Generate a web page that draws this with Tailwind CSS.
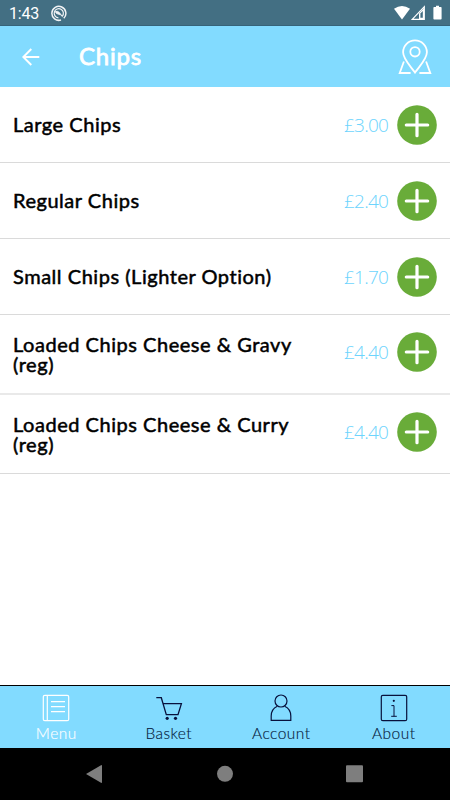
<!DOCTYPE html>
<html lang="en">
<head>
<meta charset="utf-8">
<title>Chips</title>
<script src="https://cdn.jsdelivr.net/npm/@tailwindcss/browser@4"></script>
</head>
<body class="w-[450px] h-[800px] overflow-hidden bg-white font-['Lato',sans-serif] flex flex-col text-black">
<svg class="hidden">
  <symbol id="add" viewBox="0 0 40 40"><circle cx="20" cy="20" r="19.8" fill="#69ac39"/><path d="M20 9.3V30.7M9.3 20H30.7" stroke="#fff" stroke-width="3.2" stroke-linecap="round"/></symbol>
</svg>
<div class="h-[26px] shrink-0 bg-[#436f83] border-b border-[#366379] flex items-center pl-[9px] pr-[8px] text-white">
  <span class="font-['Roboto',sans-serif] text-[16px] leading-[26px] w-[30px] pt-[2px] tracking-[-0.2px] whitespace-nowrap">1:43</span>
  <svg class="ml-[11px] w-[17px] h-[17px] mt-[1px]" viewBox="0 0 17 17" fill="none" stroke="#f1f3f5"><path d="M13.8 13.3A7 7 0 1 0 11 15" stroke-width="1.5"/><path d="M12.3 11.2A4.6 4.6 0 1 0 8.4 12.8" stroke-width="1.2"/><path d="M5.2 6.6Q8 5.4 10 8.2L12.4 11.6Q10.5 9.2 8.6 9.3Q6 9 5.2 6.6Z" fill="#f1f3f5" stroke-width="0.8"/></svg>
  <span class="grow"></span>
  <svg class="w-[48px] h-[16px]" viewBox="0 0 48 16"><path d="M0 3.8Q8 -1.8 16 3.8L8 14.4Z" fill="#fff"/><path d="M30.3 1.7V14.3H18.2Z" fill="none" stroke="#fff" stroke-width="1.2"/><path d="M25 8.2L30 3V14H25Z" fill="#fff"/><path d="M26.4 8.6L28.8 6V12.8H26.4Z" fill="#436f83"/><path d="M40.2 2H42V.7H45V2H46.8Q47.6 2 47.6 2.8V13.8Q47.6 14.6 46.8 14.6H40.2Q39.4 14.6 39.4 13.8V2.8Q39.4 2 40.2 2Z" fill="#fff"/></svg>
</div>
<header class="h-[61px] shrink-0 bg-[#82dbff] flex items-center pl-[22px] pr-[17px] text-white">
  <svg class="w-[18px] h-[18px]" viewBox="0 0 18 18" fill="none" stroke="#fff" stroke-width="1.9"><path d="M17.3 9H1.5M9.3 1L1.3 9L9.3 17"/></svg>
  <h1 class="ml-[39px] pb-[2px] text-[24px] leading-[30px] font-normal [-webkit-text-stroke:0.8px] tracking-[0.8px] grow">Chips</h1>
  <svg class="w-[36px] h-[36px]" viewBox="0 0 36 36" fill="none" stroke="#fff" stroke-width="1.8"><path d="M18 33.6C13 26.5 6.1 20 6.1 13.3A11.9 11.9 0 0 1 29.9 13.3C29.9 20 23 26.5 18 33.6Z"/><circle cx="18" cy="12.8" r="4.7"/><path d="M6.9 22.5L2.7 34H13.6M29.1 22.5L33.3 34H22.4"/></svg>
</header>
<main class="grow text-[20px] leading-[20px] [&_b]:font-normal [&_b]:grow [&_b]:tracking-[0.53px] [&_b]:[-webkit-text-stroke:0.5px] [&_i]:not-italic [&_i]:font-['Open_Sans',sans-serif] [&_i]:font-light [&_i]:text-[19px] [&_i]:tracking-[-0.75px] [&_i]:text-[#6dd4fd] [&_i]:w-[45px] [&_i]:mr-[8px] [&_i]:whitespace-nowrap">
  <div class="h-[76px] border-b border-[#dadada] flex items-center px-[13px]"><b class="pb-[2px]">Large Chips</b><i>£3.00</i><svg class="w-[40px] h-[40px] shrink-0"><use href="#add"/></svg></div>
  <div class="h-[76px] border-b border-[#dadada] flex items-center px-[13px]"><b class="pb-[2px]">Regular Chips</b><i>£2.40</i><svg class="w-[40px] h-[40px] shrink-0"><use href="#add"/></svg></div>
  <div class="h-[76px] border-b border-[#dadada] flex items-center px-[13px]"><b class="pb-[2px]">Small Chips (Lighter Option)</b><i>£1.70</i><svg class="w-[40px] h-[40px] shrink-0"><use href="#add"/></svg></div>
  <div class="h-[80px] border-b-2 border-[#e9e9e9] flex items-start pt-[17px] px-[13px]"><b class="pt-[2px]">Loaded Chips Cheese &amp; Gravy<br>(reg)</b><i class="pt-[10px]">£4.40</i><svg class="w-[40px] h-[40px] shrink-0"><use href="#add"/></svg></div>
  <div class="h-[79px] border-b border-[#dadada] flex items-start pt-[17px] px-[13px]"><b class="pt-[2px]">Loaded Chips Cheese &amp; Curry<br>(reg)</b><i class="pt-[10px]">£4.40</i><svg class="w-[40px] h-[40px] shrink-0"><use href="#add"/></svg></div>
</main>
<nav class="h-[63px] shrink-0 bg-[#82dbff] border-t border-black grid grid-cols-4 pt-[8px] text-[15.5px] leading-[20px] text-[#071b40] font-light [&_span]:mt-[1px] [&_span]:tracking-[0.45px] [&_span]:[-webkit-text-stroke:0.15px]">
  <div class="flex flex-col items-center text-white"><svg class="w-[28px] h-[28px]" viewBox="0 0 28 28" fill="none" stroke="#fff" stroke-width="1.2"><rect x="1.3" y="1.3" width="25.4" height="25.4" rx="1.5"/><path d="M5.3 1.3V26.7M9 7.7H23M9 12.7H23M9 17.7H23"/></svg><span>Menu</span></div>
  <div class="flex flex-col items-center"><svg class="w-[28px] h-[28px]" viewBox="0 0 28 28" fill="none" stroke="#08113c" stroke-width="1.3"><path d="M1.3 3.7H6.3L11.3 20.7H23L26.4 9.7H8.2"/><circle cx="12.2" cy="24.3" r="1.6" fill="#08113c" stroke="none"/><circle cx="20.5" cy="24.3" r="1.6" fill="#08113c" stroke="none"/></svg><span>Basket</span></div>
  <div class="flex flex-col items-center"><svg class="w-[28px] h-[28px]" viewBox="0 0 28 28" fill="none" stroke="#08113c" stroke-width="1.2"><circle cx="14" cy="7" r="6"/><path d="M10.3 12.2C6.3 14 4.2 17.5 4.2 22V26.4H23.8V22C23.8 17.5 21.7 14 17.7 12.2"/></svg><span>Account</span></div>
  <div class="flex flex-col items-center"><svg class="w-[28px] h-[28px]" viewBox="0 0 28 28" fill="none" stroke="#08113c" stroke-width="1.2"><rect x="1.3" y="1.3" width="25.4" height="25.4" rx="1.5"/><path d="M11.4 11.6H14V22.3M11.2 22.3H16.8" stroke-width="1"/><circle cx="13.8" cy="6.8" r="1.1" fill="#08113c" stroke="none"/></svg><span>About</span></div>
</nav>
<footer class="h-[52px] shrink-0 bg-black">
  <svg class="w-[450px] h-[52px]" viewBox="0 0 450 52" fill="#7e7e7e"><path d="M86 26L101 17.2Q102 16.7 102 18V34Q102 35.3 101 34.8Z"/><circle cx="225" cy="25.8" r="8"/><rect x="346" y="17.3" width="17" height="17" rx="1"/></svg>
</footer>
</body>
</html>
